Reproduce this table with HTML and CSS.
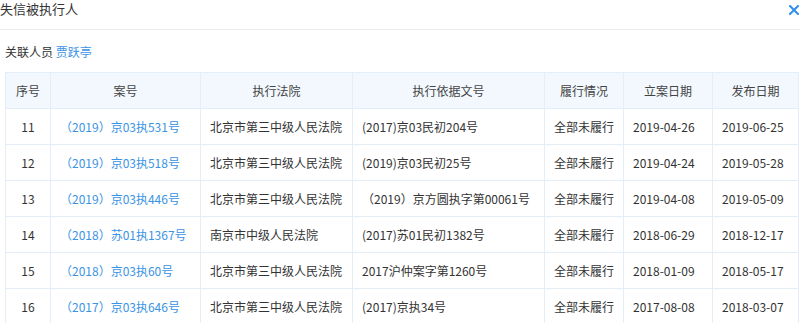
FILE: index.html
```html
<!DOCTYPE html>
<html lang="zh">
<head>
<meta charset="utf-8">
<link rel="stylesheet" href="styles.css">
</head>
<body>
<div class="titlebar">
  <span class="title">失信被执行人</span>
  <svg class="close" width="10" height="10" viewBox="0 0 10 10"><path d="M1 1L9 9M9 1L1 9" stroke="#2f8ee8" stroke-width="2" stroke-linecap="square"/></svg>
</div>
<div class="related">关联人员 <a class="link">贾跃亭</a></div>
<table class="grid">
  <colgroup>
    <col class="c1"><col class="c2"><col class="c3"><col class="c4"><col class="c5"><col class="c6"><col class="c7">
  </colgroup>
  <thead>
    <tr><th>序号</th><th>案号</th><th>执行法院</th><th>执行依据文号</th><th>履行情况</th><th>立案日期</th><th>发布日期</th></tr>
  </thead>
  <tbody>
    <tr><td class="num">11</td><td><a class="link">（2019）京03执531号</a></td><td>北京市第三中级人民法院</td><td>(2017)京03民初204号</td><td>全部未履行</td><td>2019-04-26</td><td>2019-06-25</td></tr>
    <tr><td class="num">12</td><td><a class="link">（2019）京03执518号</a></td><td>北京市第三中级人民法院</td><td>(2019)京03民初25号</td><td>全部未履行</td><td>2019-04-24</td><td>2019-05-28</td></tr>
    <tr><td class="num">13</td><td><a class="link">（2019）京03执446号</a></td><td>北京市第三中级人民法院</td><td>（2019）京方圆执字第00061号</td><td>全部未履行</td><td>2019-04-08</td><td>2019-05-09</td></tr>
    <tr><td class="num">14</td><td><a class="link">（2018）苏01执1367号</a></td><td>南京市中级人民法院</td><td>(2017)苏01民初1382号</td><td>全部未履行</td><td>2018-06-29</td><td>2018-12-17</td></tr>
    <tr><td class="num">15</td><td><a class="link">（2018）京03执60号</a></td><td>北京市第三中级人民法院</td><td>2017沪仲案字第1260号</td><td>全部未履行</td><td>2018-01-09</td><td>2018-05-17</td></tr>
    <tr><td class="num">16</td><td><a class="link">（2017）京03执646号</a></td><td>北京市第三中级人民法院</td><td>(2017)京执34号</td><td>全部未履行</td><td>2017-08-08</td><td>2018-03-07</td></tr>
  </tbody>
</table>
</body>
</html>
```
FILE: styles.css
```css
html, body {
  margin: 0;
  padding: 0;
  background: #fff;
  font-family: "Noto Sans CJK SC", "Noto Sans", sans-serif;
  color: #333;
  overflow: hidden;
}
.titlebar {
  height: 29px;
  border-bottom: 1px solid #e9e9e9;
  display: flex;
  justify-content: space-between;
  align-items: flex-start;
}
.title {
  font-size: 13px;
  line-height: 18px;
}
.close {
  margin-top: 5px;
  margin-right: 1px;
}
.related {
  font-size: 12px;
  line-height: 18px;
  margin: 13px 0 11px 5px;
}
.link {
  color: #3a93e4;
  text-decoration: none;
}
.grid {
  margin-left: 5px;
  width: 793px;
  border-collapse: collapse;
  table-layout: fixed;
  font-size: 12px;
}
.c1 { width: 45px; }
.c2 { width: 150px; }
.c3 { width: 152px; }
.c4 { width: 192px; }
.c5 { width: 79px; }
.c6 { width: 89px; }
.c7 { width: 86px; }
.grid th, .grid td {
  border: 1px solid #e4eef8;
  height: 35px;
  padding: 0 0 0 9px;
  white-space: nowrap;
  overflow: hidden;
  font-weight: normal;
}
.grid th {
  background: #f2f8fd;
  text-align: center;
  padding: 0;
  color: #444;
}
.grid td.num {
  text-align: center;
  padding: 0;
}
```
